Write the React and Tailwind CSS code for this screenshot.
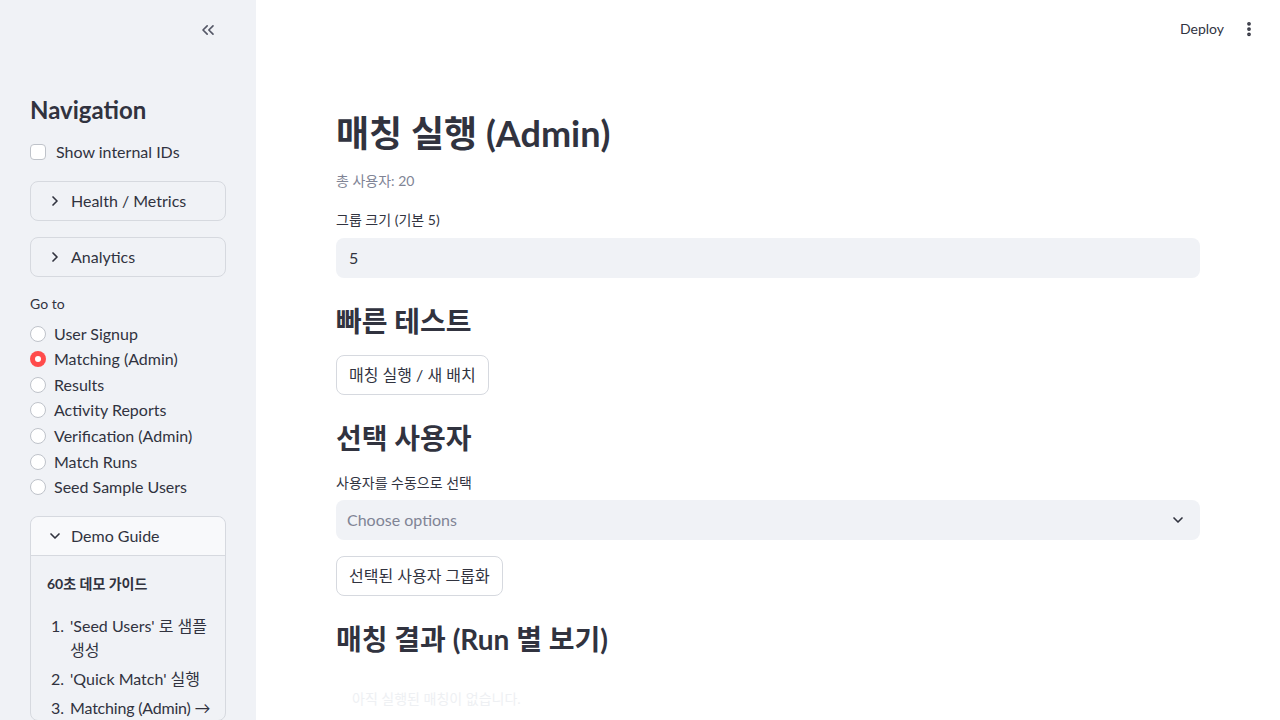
import { ChevronDown, ChevronRight, ChevronsLeft, EllipsisVertical } from 'lucide-react';

const font = { fontFamily: '"Source Sans Pro", Lato, "Noto Sans CJK KR", sans-serif' };

const pages = ['User Signup', 'Matching (Admin)', 'Results', 'Activity Reports', 'Verification (Admin)', 'Match Runs', 'Seed Sample Users'];

function Expander({ label }) {
  return (
    <div className="flex h-10 items-center rounded-lg border border-[#d6d9df] px-4 text-base text-[#31333f]">
      <ChevronRight size={16} strokeWidth={2.5} className="mr-2" />
      {label}
    </div>
  );
}

function Radio({ label, active }) {
  return (
    <div className="flex h-[25.6px] items-center gap-2 text-base text-[#31333f]">
      {active ? (
        <span className="flex h-4 w-4 items-center justify-center rounded-full bg-[#ff4b4b]">
          <span className="h-[6px] w-[6px] rounded-full bg-white" />
        </span>
      ) : (
        <span className="h-4 w-4 rounded-full border border-[#bfc3ca] bg-white" />
      )}
      {label}
    </div>
  );
}

function Sidebar() {
  return (
    <aside className="h-screen w-[256px] shrink-0 overflow-hidden bg-[#f0f2f6] px-[30px]">
      <div className="flex h-[60px] items-center justify-end pr-2">
        <ChevronsLeft size={20} strokeWidth={2} className="text-[#555867]" />
      </div>
      <h2 className="mt-[36px] text-2xl font-bold leading-[1.2] text-[#31333f]">Navigation</h2>
      <label className="mt-[15px] flex h-6 items-center gap-[10px] text-base text-[#31333f]">
        <span className="h-4 w-4 rounded border border-[#bfc3ca] bg-white" />
        Show internal IDs
      </label>
      <div className="mt-[17px]">
        <Expander label="Health / Metrics" />
      </div>
      <div className="mt-4">
        <Expander label="Analytics" />
      </div>
      <p className="mt-[17px] text-sm leading-5 text-[#31333f]">Go to</p>
      <div className="mt-[7px]">
        {pages.map((p) => (
          <Radio key={p} label={p} active={p === 'Matching (Admin)'} />
        ))}
      </div>
      <div className="mt-4 rounded-lg border border-[#d6d9df]">
        <div className="flex h-[39px] items-center rounded-t-lg border-b border-[#d6d9df] bg-[#f8f9fb] px-4 text-base text-[#31333f]">
          <ChevronDown size={16} strokeWidth={2.5} className="mr-2" />
          Demo Guide
        </div>
        <div className="px-4 pt-[18px] text-base text-[#31333f]">
          <p className="text-sm font-bold leading-5">60초 데모 가이드</p>
          <ol className="mt-[20px] flex flex-col gap-[5px] pl-1 leading-6">
            <li className="flex gap-[6px]">
              <span>1.</span>
              <span>'Seed Users' 로 샘플 생성</span>
            </li>
            <li className="flex gap-[6px]">
              <span>2.</span>
              <span>'Quick Match' 실행</span>
            </li>
            <li className="flex gap-[6px]">
              <span>3.</span>
              <span className="whitespace-nowrap tracking-[-0.2px]">Matching (Admin) →</span>
            </li>
          </ol>
        </div>
      </div>
    </aside>
  );
}

function Button({ children }) {
  return (
    <button type="button" className="flex h-10 items-center rounded-lg border border-[#d6d9df] bg-white px-3 text-base text-[#31333f]">
      {children}
    </button>
  );
}

export default function App() {
  return (
    <div className="flex h-screen w-full overflow-hidden bg-white" style={font}>
      <Sidebar />
      <main className="flex min-w-0 flex-1 flex-col">
        <header className="flex h-[58px] shrink-0 items-center justify-end gap-4 pr-[22px]">
          <span className="text-sm text-[#31333f]">Deploy</span>
          <EllipsisVertical size={18} strokeWidth={3} className="text-[#31333f]" />
        </header>
        <div className="flex flex-col px-20 text-[#31333f]">
          <h1 className="mt-[54px] text-[36px] font-bold leading-[1.2]">매칭 실행 (Admin)</h1>
          <p className="mt-4 text-sm leading-5 text-[#808495]">총 사용자: 20</p>
          <p className="mt-[19px] text-sm leading-5">그룹 크기 (기본 5)</p>
          <div className="mt-2 flex h-10 items-center rounded-lg bg-[#f0f2f6] px-[13px] text-base">5</div>
          <h3 className="mt-[27px] text-[28px] font-bold leading-[1.2]">빠른 테스트</h3>
          <div className="mt-4">
            <Button>매칭 실행 / 새 배치</Button>
          </div>
          <h3 className="mt-[27px] text-[28px] font-bold leading-[1.2]">선택 사용자</h3>
          <p className="mt-[18px] text-sm leading-5">사용자를 수동으로 선택</p>
          <div className="mt-[7px] flex h-10 items-center justify-between rounded-lg bg-[#f0f2f6] pl-[11px] pr-[14px] text-base">
            <span className="text-[#808495]">Choose options</span>
            <ChevronDown size={16} strokeWidth={2.5} className="text-[#31333f]" />
          </div>
          <div className="mt-4">
            <Button>선택된 사용자 그룹화</Button>
          </div>
          <h2 className="mt-[27px] text-[28px] font-bold leading-[1.2]">매칭 결과 (Run 별 보기)</h2>
          <p className="mt-8 pl-4 text-sm leading-5 text-[#eef0f3]">아직 실행된 매칭이 없습니다.</p>
        </div>
      </main>
    </div>
  );
}
